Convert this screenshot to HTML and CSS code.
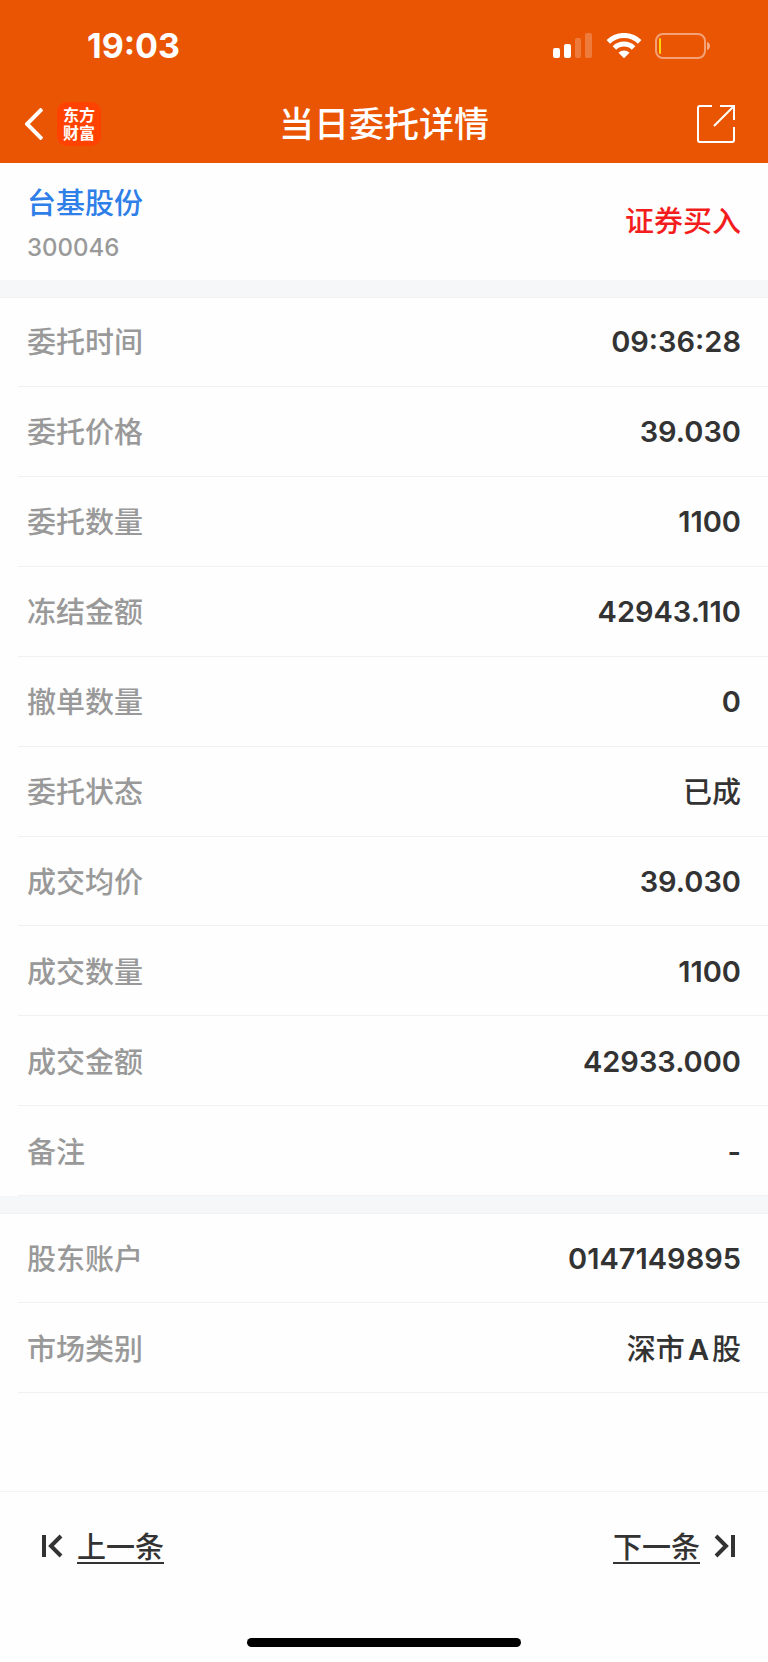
FILE: index.html
```html
<!DOCTYPE html>
<html lang="zh-CN">
<head>
  <meta charset="UTF-8" />
  <meta name="viewport" content="width=device-width, initial-scale=1.0" />
  <title>当日委托详情</title>
  <link rel="stylesheet" href="styles.css">
</head>
<body>

  <header class="topo">
    <!-- Status bar -->
    <div class="status">
      <span class="hora">19:03</span>
      <div class="status-icons">
        <svg width="40" height="26" viewBox="0 0 40 26" fill="#fff">
          <rect x="0" y="15" width="7" height="10" rx="2" />
          <rect x="11" y="11" width="7" height="14" rx="2" />
          <rect x="22" y="5" width="6" height="20" rx="2" opacity=".22" />
          <rect x="32" y="0" width="7" height="25" rx="2" opacity=".22" />
        </svg>
        <svg width="36" height="26" viewBox="0 0 36 26" fill="none" stroke="#fff" stroke-width="5">
          <path d="M2.3 8.9a22.3 22.3 0 0 1 31.4 0" />
          <path d="M8.4 15a13.7 13.7 0 0 1 19.2 0" />
          <path d="M18 25.3l-5.5-5.5a7.8 7.8 0 0 1 11 0z" fill="#fff" stroke="none" />
        </svg>
        <svg width="56" height="26" viewBox="0 0 56 26" fill="none">
          <rect x="1" y="1" width="49" height="24" rx="7" stroke="#fff" stroke-opacity=".45" stroke-width="2" />
          <path d="M52 9c4 1 4 7 0 8z" fill="#fff" fill-opacity=".5" />
          <rect x="4" y="5" width="2" height="16" rx="1" fill="#ffd60a" />
        </svg>
      </div>
    </div>

    <!-- Title bar -->
    <div class="nav">
      <a href="#" class="voltar" aria-label="返回">
        <svg width="18" height="32" viewBox="0 0 18 32" fill="none" stroke="#fff" stroke-width="4">
          <path d="M17 1L2 16l15 15" />
        </svg>
        <span class="logo">东方<br>财富</span>
      </a>
      <h1>当日委托详情</h1>
      <button class="share" type="button" aria-label="分享">
        <svg width="38" height="38" viewBox="0 0 38 38" fill="none" stroke="#fff" stroke-width="2">
          <path d="M15 1H3Q1 1 1 3v32q0 2 2 2h32q2 0 2-2V22" />
          <path d="M23 1h14v14M37 1L17 21" />
        </svg>
      </button>
    </div>
  </header>

  <main>
    <section class="stock">
      <div>
        <a href="#" class="stock-name">台基股份</a>
        <div class="stock-code">300046</div>
      </div>
      <span class="side">证券买入</span>
    </section>

    <dl class="lista pedido">
      <div class="row"><dt>委托时间</dt><dd>09:36:28</dd></div>
      <div class="row"><dt>委托价格</dt><dd>39.030</dd></div>
      <div class="row"><dt>委托数量</dt><dd>1100</dd></div>
      <div class="row"><dt>冻结金额</dt><dd>42943.110</dd></div>
      <div class="row"><dt>撤单数量</dt><dd>0</dd></div>
      <div class="row"><dt>委托状态</dt><dd class="texto">已成</dd></div>
      <div class="row"><dt>成交均价</dt><dd>39.030</dd></div>
      <div class="row"><dt>成交数量</dt><dd>1100</dd></div>
      <div class="row"><dt>成交金额</dt><dd>42933.000</dd></div>
      <div class="row"><dt>备注</dt><dd>-</dd></div>
    </dl>

    <dl class="lista conta">
      <div class="row"><dt>股东账户</dt><dd>0147149895</dd></div>
      <div class="row"><dt>市场类别</dt><dd class="texto">深市<b>A</b>股</dd></div>
    </dl>
  </main>

  <!-- Previous / next record -->
  <footer>
    <nav class="pager">
      <a href="#">
        <svg width="22" height="24" viewBox="0 0 22 24" fill="none" stroke="#333" stroke-width="4">
          <path d="M3 1v22M20 2L10 12l10 10" />
        </svg>
        <span>上一条</span>
      </a>
      <a href="#">
        <span>下一条</span>
        <svg width="22" height="24" viewBox="0 0 22 24" fill="none" stroke="#333" stroke-width="4">
          <path d="M19 1v22M2 2l10 10L2 22" />
        </svg>
      </a>
    </nav>
    <div class="home-bar"></div>
  </footer>

</body>
</html>
```
FILE: styles.css
```css
* {
  box-sizing: border-box;
}

body {
  margin: 0;
  min-height: 100vh;
  display: flex;
  flex-direction: column;
  background: #fefefe;
  color: #333;
  font-family: Inter, "Noto Sans CJK SC", sans-serif;
  font-size: 29px;
  font-weight: 500;
  line-height: 40px;
}

a {
  color: inherit;
  text-decoration: none;
}

svg {
  display: block;
}

/* header */
.topo {
  background: #ea5504;
  color: #fff;
}

.status {
  display: flex;
  justify-content: space-between;
  align-items: center;
  height: 84px;
  padding: 8px 57px 0 87px;
}

.hora {
  font-size: 34px;
  font-weight: 700;
}

.status-icons {
  display: flex;
  gap: 13px;
}

.nav {
  display: grid;
  grid-template-columns: 1fr auto 1fr;
  align-items: center;
  height: 79px;
  padding: 0 33px;
}

.voltar {
  display: flex;
  align-items: center;
  gap: 14px;
  margin-left: -8px;
}

.logo {
  width: 44px;
  height: 44px;
  padding-top: 5px;
  border-radius: 10px;
  background: #ff4200;
  font-family: "Liberation Serif", "Noto Sans CJK SC", sans-serif;
  font-size: 16px;
  font-weight: 700;
  line-height: 18px;
  text-align: center;
}

h1 {
  margin: 0;
  font-size: 35px;
  font-weight: 500;
}

.share {
  justify-self: end;
  padding: 0;
  border: 0;
  background: none;
}

/* content */
main {
  flex: 1;
  display: flex;
  flex-direction: column;
}

.stock {
  display: flex;
  justify-content: space-between;
  align-items: center;
  height: 117px;
  padding: 0 27px;
}

.stock-name {
  color: #2e7fe8;
}

.stock-code {
  margin: 8px 0 -4px;
  color: #999;
  font-size: 24px;
  line-height: 32px;
}

.side {
  color: #f41d1d;
}

.lista {
  display: flex;
  flex-direction: column;
  margin: 0;
  border-top: 17px solid #f6f7f9;
  box-shadow: inset 0 1px #f1f1f1;
}

.pedido {
  flex: 10 0 0;
}

.conta {
  flex: 2 0 0;
}

.row {
  flex: 1;
  display: flex;
  justify-content: space-between;
  align-items: center;
  min-height: 64px;
  margin-left: 18px;
  padding: 2px 27px 0 9px;
  border-bottom: 1px solid #f1f1f1;
}

dt,
.texto {
  padding-top: 2px;
}

dt {
  color: #999;
}

dd {
  margin: 0;
  font-weight: 600;
}

.texto {
  font-weight: 500;
}

.texto b {
  padding: 0 3px;
  font-weight: 600;
}

/* footer */
footer {
  margin-top: 98px;
  border-top: 1px solid #f4f4f4;
}

.pager {
  display: flex;
  justify-content: space-between;
  padding: 36px 32px 0 41px;
}

.pager a {
  display: flex;
  align-items: center;
  gap: 14px;
}

.pager span {
  padding-top: 6px;
  border-bottom: 2px solid #333;
  line-height: 28px;
}

.home-bar {
  width: 274px;
  height: 9px;
  margin: 74px auto 15px;
  border-radius: 5px;
  background: #000;
}
```
